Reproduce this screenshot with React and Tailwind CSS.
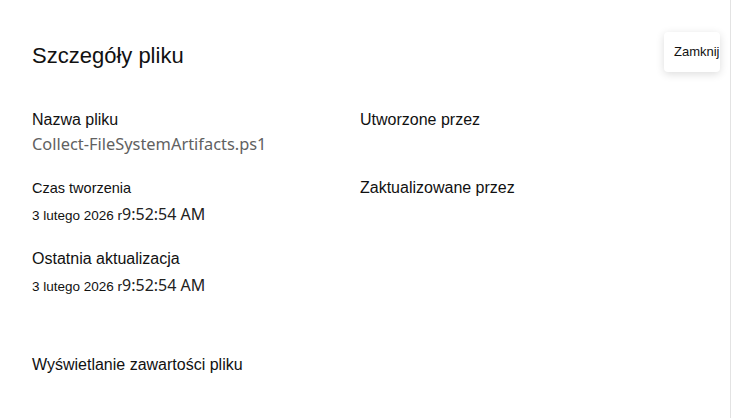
import React from 'react';

const arial = { fontFamily: '"Liberation Sans", Arial, sans-serif' };

function DateLine({ date, time }) {
    return (
        <div className="mt-[5px] text-[13.5px] leading-[22px] text-[#111]" style={arial}>
            {date}
            <span className="text-[16px] text-[#222] font-['Noto_Sans',sans-serif]">{time}</span>
        </div>
    );
}

export default function App() {
    return (
        <div className="w-[731px] h-[418px] bg-white border-r border-[#e3e3e3] overflow-hidden" style={arial}>
            <div className="pt-[32px] pl-[32px] pr-[10px]">
                {/* naglowek */}
                <div className="flex justify-between items-start">
                    <h1 className="mt-[10px] text-[22px] leading-[28px] text-[#111] font-normal">Szczegóły pliku</h1>
                    <button className="w-[56px] h-[40px] pl-[10px] bg-white rounded-[4px] shadow-[0_2px_8px_rgba(0,0,0,0.14)] overflow-hidden whitespace-nowrap text-left text-[13px] text-[#111]">
                        Zamknij
                    </button>
                </div>

                {/* szczegoly */}
                <div className="mt-[38px] grid grid-cols-[328px_1fr]">
                    <div>
                        <div className="text-[16px] leading-[20px] text-[#111]">Nazwa pliku</div>
                        <div className="mt-[2px] text-[16.4px] leading-[24px] text-[#616161] font-['Noto_Sans',sans-serif]">
                            Collect-FileSystemArtifacts.ps1
                        </div>
                    </div>
                    <div className="text-[16px] leading-[20px] text-[#111]">Utworzone przez</div>

                    <div className="mt-[22px]">
                        <div className="text-[14.5px] leading-[20px] text-[#111]">Czas tworzenia</div>
                        <DateLine date="3 lutego 2026 r" time="9:52:54 AM" />
                    </div>
                    <div className="mt-[22px] text-[16px] leading-[20px] text-[#111]">Zaktualizowane przez</div>

                    <div className="mt-[22px]">
                        <div className="text-[16px] leading-[20px] text-[#111]">Ostatnia aktualizacja</div>
                        <DateLine date="3 lutego 2026 r" time="9:52:54 AM" />
                    </div>
                </div>

                <div className="mt-[57px] text-[16px] leading-[20px] text-[#111]">Wyświetlanie zawartości pliku</div>
            </div>
        </div>
    );
}
